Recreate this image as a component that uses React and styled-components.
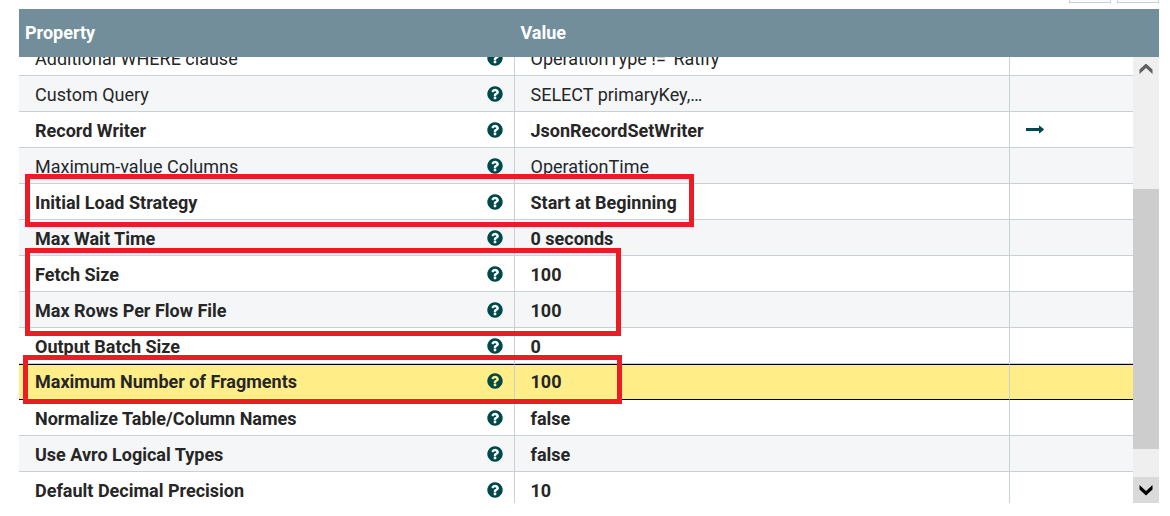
import React, { useLayoutEffect, useRef } from "react";
import styled, { createGlobalStyle, css } from "styled-components";

const GlobalStyle = createGlobalStyle`
  *, *::before, *::after { box-sizing: border-box; }
  body {
    margin: 0;
    background: #ffffff;
    color: #262626;
    font-family: Roboto, "Liberation Sans", sans-serif;
    font-size: 18px;
  }
`;

const Page = styled.main`
  padding: 0 11px 13px 19px;
`;

const Toolbar = styled.div`
  display: flex;
  justify-content: flex-end;
  align-items: flex-end;
  gap: 6px;
  height: 3px;
  margin-bottom: 6px;
  overflow: hidden;
`;

const ToolButton = styled.button`
  flex: none;
  width: 42px;
  height: 36px;
  padding: 0;
  border: 1px solid #c7d2d7;
  background: #f9fafb;
`;

const Panel = styled.section`
  position: relative;
  display: grid;
  grid-template-columns: minmax(0, 1fr) 26px;
  background: #728e9b;
`;

const Viewport = styled.div`
  height: 494px;
  overflow: hidden;
`;

const Table = styled.table`
  width: 100%;
  table-layout: fixed;
  border-collapse: separate;
  border-spacing: 0;
`;

const ActionsColumn = styled.col`
  width: 123px;
`;

const HeadCell = styled.th`
  position: sticky;
  top: 0;
  z-index: 1;
  height: 48px;
  padding: 0 6px 2px;
  background: #728e9b;
  color: #ffffff;
  font-weight: 700;
  text-align: left;
`;

const Cell = styled.td`
  height: 36px;
  padding: 2px 16px 0;
  border-right: 1px solid #c7d2d7;
  border-bottom: 1px solid #c7d2d7;
  line-height: 24px;
  white-space: nowrap;

  &:last-child {
    border-right: 0;
  }
`;

const Row = styled.tr`
  background: #ffffff;
  font-weight: ${({ $required }) => ($required ? 700 : 400)};

  &:nth-child(even) {
    background: #f4f6f8;
  }

  ${({ $selected }) =>
    $selected &&
    css`
      &&& {
        background: #ffee88;
      }
      ${Cell} {
        border-top: 1px solid #000000;
        border-bottom-color: #000000;
        padding-bottom: 2px;
      }
    `}
`;

const PropertyName = styled.div`
  display: flex;
  align-items: center;
  justify-content: space-between;
  margin-right: -6px;
`;

const HelpSvg = styled.svg`
  display: block;
  width: 18px;
  height: 18px;
  margin-bottom: 2px;
  fill: #004849;
`;

const LinkButton = styled.button`
  display: block;
  padding: 0 0 2px;
  border: 0;
  background: none;

  svg {
    display: block;
    fill: #004849;
  }
`;

const Scrollbar = styled.div`
  display: grid;
  grid-template-rows: 26px 106px 260px 1fr 26px;
  margin-top: 48px;
  background: #efefef;
`;

const ScrollButton = styled.button`
  display: grid;
  place-items: center;
  padding: 0;
  border: 0;
  background: ${({ $active }) => ($active ? "#dadada" : "#efefef")};
  color: ${({ $active }) => ($active ? "#000000" : "#606060")};
`;

const Thumb = styled.div`
  grid-row: 3;
  background: #cdcdcd;
`;

const DownSlot = styled(ScrollButton)`
  grid-row: 5;
`;

/* Callout frame laid over the rows it points out. */
const Highlight = styled.div`
  position: absolute;
  z-index: 2;
  left: ${({ $left }) => $left}px;
  top: ${({ $top }) => $top}px;
  width: ${({ $width }) => $width}px;
  height: ${({ $height }) => $height}px;
  border: 5px solid #ed1c24;
  pointer-events: none;
`;

const rows = [
  { name: "Additional WHERE clause", value: "OperationType != 'Ratify'" },
  { name: "Custom Query", value: "SELECT primaryKey,…" },
  { name: "Record Writer", value: "JsonRecordSetWriter", required: true, link: true },
  { name: "Maximum-value Columns", value: "OperationTime" },
  { name: "Initial Load Strategy", value: "Start at Beginning", required: true },
  { name: "Max Wait Time", value: "0 seconds", required: true },
  { name: "Fetch Size", value: "100", required: true },
  { name: "Max Rows Per Flow File", value: "100", required: true },
  { name: "Output Batch Size", value: "0", required: true },
  { name: "Maximum Number of Fragments", value: "100", required: true, selected: true },
  { name: "Normalize Table/Column Names", value: "false", required: true },
  { name: "Use Avro Logical Types", value: "false", required: true },
  { name: "Default Decimal Precision", value: "10", required: true },
];

const highlights = [
  { left: 6, top: 165, width: 669, height: 53 },
  { left: 6, top: 239, width: 596, height: 88 },
  { left: 4, top: 346, width: 599, height: 49 },
];

const HelpIcon = () => (
  <HelpSvg viewBox="0 0 1792 1792" aria-hidden="true">
    <path d="M1024 1376v-192q0-14-9-23t-23-9h-192q-14 0-23 9t-9 23v192q0 14 9 23t23 9h192q14 0 23-9t9-23zm256-672q0-88-55.5-163t-138.5-116-170-41q-243 0-371 213-15 24 8 42l132 100q7 6 19 6 16 0 25-12 53-68 86-92 34-24 86-24 48 0 85.5 26t37.5 59q0 38-20 61t-68 45q-63 28-115.5 86.5t-52.5 125.5v36q0 14 9 23t23 9h192q14 0 23-9t9-23q0-19 21.5-49.5t54.5-49.5q32-18 49-28.5t46-35 44.5-48 28-60.5 12.5-81zm384 192q0 209-103 385.5t-279.5 279.5-385.5 103-385.5-103-279.5-279.5-103-385.5 103-385.5 279.5-279.5 385.5-103 385.5 103 279.5 279.5 103 385.5z" />
  </HelpSvg>
);

const ArrowIcon = () => (
  <svg width="18" height="9" viewBox="0 0 18 9" aria-hidden="true">
    <path d="M0.3 3H13V0.9Q13 0.3 13.6 0.7L17.7 4.1Q18 4.5 17.7 4.9L13.6 8.3Q13 8.7 13 8.1V6H0.3Q0 6 0 5.7V3.3Q0 3 0.3 3Z" />
  </svg>
);

const Chevron = ({ down }) => (
  <svg width="14" height="12" viewBox="0 0 14 12" aria-hidden="true">
    <path
      fill="currentColor"
      d={down ? "M0.5 1L7 7L13.5 1V5.5L7 11.5L0.5 5.5Z" : "M0.5 10L7 4L13.5 10V5.5L7 -0.5L0.5 5.5Z"}
    />
  </svg>
);

export default function App() {
  const viewport = useRef(null);

  useLayoutEffect(() => {
    viewport.current.scrollTop = 17;
  }, []);

  return (
    <>
      <GlobalStyle />
      <Page>
        <Toolbar>
          <ToolButton aria-label="Verify properties" />
          <ToolButton aria-label="Add property" />
        </Toolbar>
        <Panel>
          <Viewport ref={viewport}>
            <Table>
              <colgroup>
                <col />
                <col />
                <ActionsColumn />
              </colgroup>
              <thead>
                <tr>
                  <HeadCell scope="col">Property</HeadCell>
                  <HeadCell scope="col">Value</HeadCell>
                  <HeadCell scope="col" aria-label="Actions" />
                </tr>
              </thead>
              <tbody>
                {rows.map((row) => (
                  <Row key={row.name} $required={row.required} $selected={row.selected}>
                    <Cell>
                      <PropertyName>
                        {row.name}
                        <HelpIcon />
                      </PropertyName>
                    </Cell>
                    <Cell>{row.value}</Cell>
                    <Cell>
                      {row.link && (
                        <LinkButton aria-label="Go to service">
                          <ArrowIcon />
                        </LinkButton>
                      )}
                    </Cell>
                  </Row>
                ))}
              </tbody>
            </Table>
          </Viewport>
          <Scrollbar>
            <ScrollButton aria-label="Scroll up">
              <Chevron />
            </ScrollButton>
            <Thumb />
            <DownSlot $active aria-label="Scroll down">
              <Chevron down />
            </DownSlot>
          </Scrollbar>
          {highlights.map((box) => (
            <Highlight
              key={box.top}
              $left={box.left}
              $top={box.top}
              $width={box.width}
              $height={box.height}
            />
          ))}
        </Panel>
      </Page>
    </>
  );
}
